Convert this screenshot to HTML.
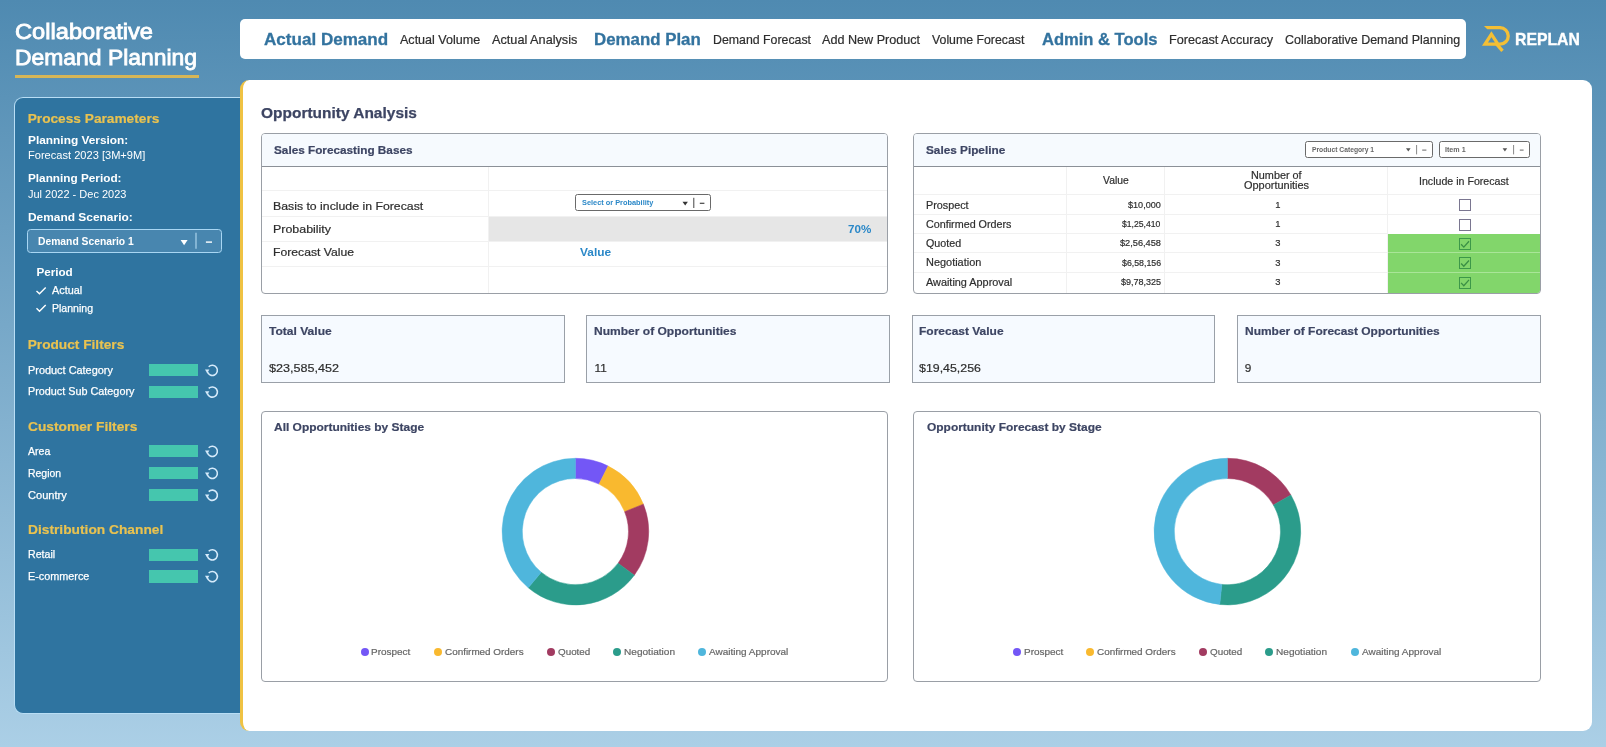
<!DOCTYPE html>
<html lang="en">
<head>
<meta charset="utf-8">
<title>Collaborative Demand Planning - Opportunity Analysis</title>
<style>
*{box-sizing:border-box;margin:0;padding:0}
html,body{width:1606px;height:747px;overflow:hidden}
body{position:relative;font-family:"Liberation Sans",sans-serif;background:linear-gradient(180deg,#4f8ab1 0%,#abcfe6 100%)}
.a{position:absolute}
.t{position:absolute;white-space:pre;font-family:"Liberation Sans",sans-serif;transform-origin:0 0}
#uline{left:15px;top:74.7px;width:184px;height:2.9px;background:#d6b657}
#nav{left:240px;top:19px;width:1225.5px;height:40px;background:#fff;border-radius:5px}
#side{left:14px;top:97px;width:232px;height:616.5px;background:#2f74a0;border:1px solid #b9def5;border-right:none;border-radius:9px 0 0 9px}
#main{left:240px;top:80px;width:1352px;height:650.5px;background:#fff;border-left:3px solid #efc243;border-radius:9px}
#dd{left:27.3px;top:229.2px;width:194.5px;height:23.8px;background:#4886af;border:1.2px solid #a8d6f3;border-radius:3.5px}
.bar{position:absolute;left:148.9px;width:48.8px;height:12.3px;background:#45c6ae}
.panel{position:absolute;border:1px solid #9a9fa6;border-radius:4px;background:#fff;overflow:hidden}
.ph{position:absolute;left:0;top:0;right:0;height:33px;background:#f6fafe;border-bottom:1px solid #8b9097}
.hl{position:absolute;left:0;right:0;height:1px;background:#f1f1f1}
.vl{position:absolute;top:33px;bottom:0;width:1px;background:#f1f1f1}
.card{position:absolute;top:315.4px;height:67.2px;border:1px solid #9aa0a8;background:#f6faff}
.sel{position:absolute;border:1px solid #6a6a6a;border-radius:2.5px;background:#fff}
.cb{position:absolute;left:1458.7px;width:12.2px;height:12px;border:1.2px solid #7a7690;background:#fff}
.cb.on{border-color:#3d9849;background:#82d66b}
.dot{position:absolute;top:647.8px;width:8px;height:8px;border-radius:50%}
svg{position:absolute;overflow:visible}
</style>
</head>
<body>
<div class="a" id="uline"></div>
<div class="a" id="nav"></div>
<!-- logo -->
<svg style="left:1480px;top:22px" width="34" height="34" viewBox="1480 22 34 34" fill="none" stroke="#f4bf35" stroke-width="3.3" stroke-linejoin="miter">
  <path d="M1500 27.7 A8.25 8.25 0 0 1 1500 44.2 H1485 L1491.4 34.2 L1497.9 44.2"/>
  <path d="M1484 26.05 H1500.5 V29.35 H1487.3Z" fill="#f4bf35" stroke="none"/>
  <path d="M1496 43.4 L1502.5 50.9"/>
</svg>

<div class="a" id="side"></div>
<div class="a" id="main"></div>

<!-- sidebar widgets -->
<div class="a" id="dd"></div>
<svg style="left:0;top:0" width="246" height="747" viewBox="0 0 246 747">
  <path d="M180.6 240.1 h7 l-3.5 5.2z" fill="#fff"/>
  <path d="M196 232.8 V248.8" stroke="#b4daf2" stroke-width="1.1"/>
  <path d="M205.9 242.1 H212" stroke="#fff" stroke-width="1.4"/>
  <path d="M36.5 290.9 L39.5 293.8 L45.7 287.6" stroke="#fff" stroke-width="1.4" fill="none"/>
  <path d="M36.5 308.3 L39.5 311.2 L45.7 305" stroke="#fff" stroke-width="1.4" fill="none"/>
  <defs>
    <g id="rf">
      <path d="M-3.6 -3.7 A5.1 5.1 0 1 1 -4.9 1.4" fill="none" stroke="#d6ebfb" stroke-width="1.6"/>
      <path d="M-7.3 -0.9 L-2.9 -0.9 L-5.2 2.6z" fill="#d6ebfb"/>
    </g>
  </defs>
  <use href="#rf" x="212.3" y="370.4"/>
  <use href="#rf" x="212.3" y="392.1"/>
  <use href="#rf" x="212.3" y="451.4"/>
  <use href="#rf" x="212.3" y="473.4"/>
  <use href="#rf" x="212.3" y="495.3"/>
  <use href="#rf" x="212.3" y="554.9"/>
  <use href="#rf" x="212.3" y="576.7"/>
</svg>
<div class="bar" style="top:364px"></div>
<div class="bar" style="top:385.7px"></div>
<div class="bar" style="top:445.1px"></div>
<div class="bar" style="top:467.1px"></div>
<div class="bar" style="top:489px"></div>
<div class="bar" style="top:548.6px"></div>
<div class="bar" style="top:570.4px"></div>

<!-- Sales Forecasting Bases -->
<div class="panel" style="left:261.3px;top:133px;width:626.5px;height:161px">
  <div class="ph"></div>
  <div class="a" style="left:226.2px;top:83px;right:0;height:25px;background:#e6e6e6"></div>
  <div class="hl" style="top:56px"></div>
  <div class="hl" style="top:82px"></div>
  <div class="hl" style="top:107px"></div>
  <div class="hl" style="top:132px"></div>
  <div class="vl" style="left:225.7px"></div>
</div>
<div class="sel" style="left:574.8px;top:194.3px;width:136.6px;height:17.2px"></div>

<!-- Sales Pipeline -->
<div class="panel" style="left:913.3px;top:133px;width:627.3px;height:161px">
  <div class="ph"></div>
  <div class="a" style="left:472.8px;top:100px;right:0;bottom:0;background:#82d66b"></div>
  <div class="a" style="left:472.8px;top:118px;right:0;height:1px;background:#a9e598"></div>
  <div class="a" style="left:472.8px;top:138px;right:0;height:1px;background:#a9e598"></div>
  <div class="hl" style="top:60px"></div>
  <div class="hl" style="top:80px"></div>
  <div class="hl" style="top:99px;width:472.8px;right:auto"></div>
  <div class="hl" style="top:118px;width:472.8px;right:auto"></div>
  <div class="hl" style="top:138px;width:472.8px;right:auto"></div>
  <div class="vl" style="left:151.5px"></div>
  <div class="vl" style="left:249.9px"></div>
  <div class="vl" style="left:472.5px"></div>
</div>
<div class="sel" style="left:1305.2px;top:141.3px;width:127.6px;height:16.6px"></div>
<div class="sel" style="left:1439.2px;top:141.3px;width:90.4px;height:16.6px"></div>
<div class="cb" style="top:199.1px"></div>
<div class="cb" style="top:218.8px"></div>
<div class="cb on" style="top:237.9px"></div>
<div class="cb on" style="top:257.1px"></div>
<div class="cb on" style="top:276.5px"></div>
<svg style="left:0;top:0" width="1606" height="747" viewBox="0 0 1606 747">
  <g fill="#333">
    <path d="M682.5 201.8 h5.4 l-2.7 3.8z"/>
    <path d="M1406 148.3 h4.6 l-2.3 3.2z" fill="#555"/>
    <path d="M1502.6 148.3 h4.6 l-2.3 3.2z" fill="#555"/>
  </g>
  <g stroke="#444" stroke-width="1" fill="none">
    <path d="M693.8 197.8 V208"/>
    <path d="M699.8 203.3 H704.4" stroke-width="1.2"/>
    <path d="M1416.6 145 V154.4" stroke="#888"/>
    <path d="M1422.2 150.1 H1426.4" stroke="#666"/>
    <path d="M1513.6 145 V154.4" stroke="#888"/>
    <path d="M1519.8 150.1 H1523.6" stroke="#666"/>
  </g>
  <g stroke="#3a8f45" stroke-width="1.3" fill="none">
    <path d="M1461.1 244.3 L1463.8 247.1 L1469 241.3"/>
    <path d="M1461.1 263.5 L1463.8 266.3 L1469 260.5"/>
    <path d="M1461.1 282.9 L1463.8 285.7 L1469 279.9"/>
  </g>
</svg>

<!-- KPI cards -->
<div class="card" style="left:260.9px;width:304px"></div>
<div class="card" style="left:586.3px;width:303.6px"></div>
<div class="card" style="left:911.7px;width:303.7px"></div>
<div class="card" style="left:1237.1px;width:303.6px"></div>

<!-- Charts -->
<div class="panel" style="left:261.2px;top:411px;width:627.1px;height:271px"></div>
<div class="panel" style="left:913.3px;top:411px;width:627.4px;height:271px"></div>
<svg style="left:0;top:0" width="1606" height="747" viewBox="0 0 1606 747"><path d="M575.40 458.30 A73.3 73.3 0 0 1 608.11 466.00 L599.09 484.08 A53.1 53.1 0 0 0 575.40 478.50Z" fill="#7357f6" stroke="#7357f6" stroke-width=".5"/><path d="M608.11 466.00 A73.3 73.3 0 0 1 643.36 504.14 L624.63 511.71 A53.1 53.1 0 0 0 599.09 484.08Z" fill="#f9b92f" stroke="#f9b92f" stroke-width=".5"/><path d="M643.36 504.14 A73.3 73.3 0 0 1 634.32 575.20 L618.08 563.19 A53.1 53.1 0 0 0 624.63 511.71Z" fill="#a23b61" stroke="#a23b61" stroke-width=".5"/><path d="M634.32 575.20 A73.3 73.3 0 0 1 528.28 587.75 L541.27 572.28 A53.1 53.1 0 0 0 618.08 563.19Z" fill="#2b9c8b" stroke="#2b9c8b" stroke-width=".5"/><path d="M528.28 587.75 A73.3 73.3 0 0 1 575.40 458.30 L575.40 478.50 A53.1 53.1 0 0 0 541.27 572.28Z" fill="#4fb6dc" stroke="#4fb6dc" stroke-width=".5"/><path d="M1227.40 458.30 A73.3 73.3 0 0 1 1290.88 494.95 L1273.39 505.05 A53.1 53.1 0 0 0 1227.40 478.50Z" fill="#a23b61" stroke="#a23b61" stroke-width=".5"/><path d="M1290.88 494.95 A73.3 73.3 0 0 1 1219.74 604.50 L1221.85 584.41 A53.1 53.1 0 0 0 1273.39 505.05Z" fill="#2b9c8b" stroke="#2b9c8b" stroke-width=".5"/><path d="M1219.74 604.50 A73.3 73.3 0 0 1 1227.40 458.30 L1227.40 478.50 A53.1 53.1 0 0 0 1221.85 584.41Z" fill="#4fb6dc" stroke="#4fb6dc" stroke-width=".5"/></svg>
<div class="dot" style="left:360.5px;background:#7357f6"></div><div class="dot" style="left:433.8px;background:#f9b92f"></div><div class="dot" style="left:546.7px;background:#a23b61"></div><div class="dot" style="left:613.0px;background:#2b9c8b"></div><div class="dot" style="left:698.4px;background:#4fb6dc"></div><div class="dot" style="left:1012.8px;background:#7357f6"></div><div class="dot" style="left:1086.1px;background:#f9b92f"></div><div class="dot" style="left:1199.0px;background:#a23b61"></div><div class="dot" style="left:1265.3px;background:#2b9c8b"></div><div class="dot" style="left:1350.7px;background:#4fb6dc"></div>
<div id="tx" style="position:absolute;left:0;top:0;width:1606px;height:747px;will-change:transform">
<span class="t" style="left:15.40px;top:22.02px;font-size:21.5px;line-height:21.5px;color:#fff;transform:scaleX(1.0997);-webkit-text-stroke:.8px #fff;">Collaborative</span>
<span class="t" style="left:15.40px;top:48.00px;font-size:21.5px;line-height:21.5px;color:#fff;transform:scaleX(1.0648);-webkit-text-stroke:.8px #fff;">Demand Planning</span>
<span class="t" style="left:264.00px;top:32.01px;font-size:16.8px;line-height:16.8px;color:#33739f;font-weight:700;transform:scaleX(1.0167);-webkit-text-stroke:.3px #33739f;">Actual Demand</span>
<span class="t" style="left:400.00px;top:34.00px;font-size:12.4px;line-height:12.4px;color:#2e2e2e;transform:scaleX(1.0124);-webkit-text-stroke:.2px #2e2e2e;">Actual Volume</span>
<span class="t" style="left:492.00px;top:34.00px;font-size:12.4px;line-height:12.4px;color:#2e2e2e;transform:scaleX(1.0247);-webkit-text-stroke:.2px #2e2e2e;">Actual Analysis</span>
<span class="t" style="left:594.00px;top:32.01px;font-size:16.8px;line-height:16.8px;color:#33739f;font-weight:700;transform:scaleX(1.0046);-webkit-text-stroke:.3px #33739f;">Demand Plan</span>
<span class="t" style="left:712.60px;top:34.00px;font-size:12.4px;line-height:12.4px;color:#2e2e2e;transform:scaleX(0.9951);-webkit-text-stroke:.2px #2e2e2e;">Demand Forecast</span>
<span class="t" style="left:822.40px;top:34.00px;font-size:12.4px;line-height:12.4px;color:#2e2e2e;transform:scaleX(1.0174);-webkit-text-stroke:.2px #2e2e2e;">Add New Product</span>
<span class="t" style="left:932.20px;top:34.00px;font-size:12.4px;line-height:12.4px;color:#2e2e2e;transform:scaleX(0.9937);-webkit-text-stroke:.2px #2e2e2e;">Volume Forecast</span>
<span class="t" style="left:1042.00px;top:32.01px;font-size:16.8px;line-height:16.8px;color:#33739f;font-weight:700;transform:scaleX(0.9859);-webkit-text-stroke:.3px #33739f;">Admin &amp; Tools</span>
<span class="t" style="left:1169.30px;top:34.00px;font-size:12.4px;line-height:12.4px;color:#2e2e2e;transform:scaleX(1.0224);-webkit-text-stroke:.2px #2e2e2e;">Forecast Accuracy</span>
<span class="t" style="left:1284.80px;top:34.00px;font-size:12.4px;line-height:12.4px;color:#2e2e2e;transform:scaleX(1.0054);-webkit-text-stroke:.2px #2e2e2e;">Collaborative Demand Planning</span>
<span class="t" style="left:1515.30px;top:31.01px;font-size:16.3px;line-height:16.3px;color:#fff;font-weight:700;transform:scaleX(0.9678);-webkit-text-stroke:.35px #fff;">REPLAN</span>
<span class="t" style="left:27.70px;top:112.02px;font-size:13.7px;line-height:13.7px;color:#e9c250;font-weight:700;-webkit-text-stroke:.2px #e9c250;">Process Parameters</span>
<span class="t" style="left:27.70px;top:134.00px;font-size:11.7px;line-height:11.7px;color:#fff;font-weight:700;transform:scaleX(1.0160);">Planning Version:</span>
<span class="t" style="left:27.70px;top:150.02px;font-size:10.5px;line-height:10.5px;color:#fff;transform:scaleX(1.0550);">Forecast 2023 [3M+9M]</span>
<span class="t" style="left:27.70px;top:172.00px;font-size:11.7px;line-height:11.7px;color:#fff;font-weight:700;transform:scaleX(1.0069);">Planning Period:</span>
<span class="t" style="left:27.70px;top:189.02px;font-size:10.5px;line-height:10.5px;color:#fff;transform:scaleX(1.0470);">Jul 2022 - Dec 2023</span>
<span class="t" style="left:27.70px;top:211.00px;font-size:11.7px;line-height:11.7px;color:#fff;font-weight:700;transform:scaleX(1.0202);">Demand Scenario:</span>
<span class="t" style="left:37.60px;top:237.00px;font-size:10.4px;line-height:10.4px;color:#fff;font-weight:700;transform:scaleX(0.9932);">Demand Scenario 1</span>
<span class="t" style="left:36.40px;top:266.02px;font-size:11.7px;line-height:11.7px;color:#fff;font-weight:700;">Period</span>
<span class="t" style="left:52.20px;top:285.01px;font-size:11px;line-height:11px;color:#fff;transform:scaleX(0.9844);-webkit-text-stroke:.25px #fff;">Actual</span>
<span class="t" style="left:52.20px;top:303.00px;font-size:11px;line-height:11px;color:#fff;transform:scaleX(0.9573);-webkit-text-stroke:.25px #fff;">Planning</span>
<span class="t" style="left:27.70px;top:338.00px;font-size:13.7px;line-height:13.7px;color:#e9c250;font-weight:700;-webkit-text-stroke:.2px #e9c250;">Product Filters</span>
<span class="t" style="left:27.70px;top:365.01px;font-size:11px;line-height:11px;color:#fff;transform:scaleX(0.9917);-webkit-text-stroke:.25px #fff;">Product Category</span>
<span class="t" style="left:27.70px;top:386.01px;font-size:11px;line-height:11px;color:#fff;transform:scaleX(0.9831);-webkit-text-stroke:.25px #fff;">Product Sub Category</span>
<span class="t" style="left:27.70px;top:420.00px;font-size:13.7px;line-height:13.7px;color:#e9c250;font-weight:700;transform:scaleX(1.0049);-webkit-text-stroke:.2px #e9c250;">Customer Filters</span>
<span class="t" style="left:27.70px;top:446.01px;font-size:11px;line-height:11px;color:#fff;transform:scaleX(0.9591);-webkit-text-stroke:.25px #fff;">Area</span>
<span class="t" style="left:27.70px;top:468.01px;font-size:11px;line-height:11px;color:#fff;transform:scaleX(0.9495);-webkit-text-stroke:.25px #fff;">Region</span>
<span class="t" style="left:27.70px;top:490.01px;font-size:11px;line-height:11px;color:#fff;transform:scaleX(1.0070);-webkit-text-stroke:.25px #fff;">Country</span>
<span class="t" style="left:27.70px;top:523.00px;font-size:13.7px;line-height:13.7px;color:#e9c250;font-weight:700;transform:scaleX(1.0052);-webkit-text-stroke:.2px #e9c250;">Distribution Channel</span>
<span class="t" style="left:27.70px;top:549.00px;font-size:11px;line-height:11px;color:#fff;transform:scaleX(0.9636);-webkit-text-stroke:.25px #fff;">Retail</span>
<span class="t" style="left:27.70px;top:571.00px;font-size:11px;line-height:11px;color:#fff;transform:scaleX(0.9833);-webkit-text-stroke:.25px #fff;">E-commerce</span>
<span class="t" style="left:261.40px;top:105.00px;font-size:15.1px;line-height:15.1px;color:#3d4563;font-weight:700;transform:scaleX(1.0251);-webkit-text-stroke:.25px #3d4563;">Opportunity Analysis</span>
<span class="t" style="left:273.70px;top:145.01px;font-size:11.4px;line-height:11.4px;color:#3d4563;font-weight:700;transform:scaleX(1.0318);-webkit-text-stroke:.2px #3d4563;">Sales Forecasting Bases</span>
<span class="t" style="left:273.30px;top:201.00px;font-size:11.3px;line-height:11.3px;color:#2e2e2e;transform:scaleX(1.0873);-webkit-text-stroke:.2px #2e2e2e;">Basis to include in Forecast</span>
<span class="t" style="left:273.30px;top:224.00px;font-size:11.3px;line-height:11.3px;color:#2e2e2e;transform:scaleX(1.0995);-webkit-text-stroke:.2px #2e2e2e;">Probability</span>
<span class="t" style="left:273.30px;top:247.01px;font-size:11.3px;line-height:11.3px;color:#2e2e2e;transform:scaleX(1.0780);-webkit-text-stroke:.2px #2e2e2e;">Forecast Value</span>
<span class="t" style="left:581.70px;top:199.00px;font-size:8px;line-height:8px;color:#2b88c8;font-weight:700;transform:scaleX(0.9217);">Select or Probability</span>
<span class="t" style="left:847.50px;top:224.01px;font-size:11.4px;line-height:11.4px;color:#2b88c8;font-weight:700;transform:scaleX(1.0214);">70%</span>
<span class="t" style="left:580.00px;top:247.01px;font-size:11.4px;line-height:11.4px;color:#2b88c8;font-weight:700;transform:scaleX(1.0448);">Value</span>
<span class="t" style="left:926.10px;top:145.01px;font-size:11.4px;line-height:11.4px;color:#3d4563;font-weight:700;transform:scaleX(1.0338);-webkit-text-stroke:.2px #3d4563;">Sales Pipeline</span>
<span class="t" style="left:1312.40px;top:147.01px;font-size:6.8px;line-height:6.8px;color:#666;font-weight:700;transform:scaleX(0.9904);">Product Category 1</span>
<span class="t" style="left:1444.50px;top:147.01px;font-size:6.8px;line-height:6.8px;color:#666;font-weight:700;transform:scaleX(1.0480);">Item 1</span>
<span class="t" style="left:1103.00px;top:175.01px;font-size:11px;line-height:11px;color:#2e2e2e;transform:scaleX(0.9404);-webkit-text-stroke:.2px #2e2e2e;">Value</span>
<span class="t" style="left:1251.20px;top:170.00px;font-size:11px;line-height:11px;color:#2e2e2e;transform:scaleX(0.9852);-webkit-text-stroke:.2px #2e2e2e;">Number of</span>
<span class="t" style="left:1244.20px;top:180.00px;font-size:11px;line-height:11px;color:#2e2e2e;transform:scaleX(0.9948);-webkit-text-stroke:.2px #2e2e2e;">Opportunities</span>
<span class="t" style="left:1419.40px;top:176.00px;font-size:11px;line-height:11px;color:#2e2e2e;transform:scaleX(0.9652);-webkit-text-stroke:.2px #2e2e2e;">Include in Forecast</span>
<span class="t" style="left:926.10px;top:200.01px;font-size:11px;line-height:11px;color:#2e2e2e;transform:scaleX(0.9811);-webkit-text-stroke:.2px #2e2e2e;">Prospect</span>
<span class="t" style="left:1128.00px;top:200.01px;font-size:9.4px;line-height:9.4px;color:#2e2e2e;transform:scaleX(0.9678);-webkit-text-stroke:.2px #2e2e2e;">$10,000</span>
<span class="t" style="left:1275.20px;top:200.01px;font-size:9.4px;line-height:9.4px;color:#2e2e2e;-webkit-text-stroke:.2px #2e2e2e;">1</span>
<span class="t" style="left:926.10px;top:219.01px;font-size:11px;line-height:11px;color:#2e2e2e;transform:scaleX(0.9780);-webkit-text-stroke:.2px #2e2e2e;">Confirmed Orders</span>
<span class="t" style="left:1122.40px;top:219.01px;font-size:9.4px;line-height:9.4px;color:#2e2e2e;transform:scaleX(0.9204);-webkit-text-stroke:.2px #2e2e2e;">$1,25,410</span>
<span class="t" style="left:1275.20px;top:219.01px;font-size:9.4px;line-height:9.4px;color:#2e2e2e;-webkit-text-stroke:.2px #2e2e2e;">1</span>
<span class="t" style="left:926.10px;top:238.00px;font-size:11px;line-height:11px;color:#2e2e2e;transform:scaleX(0.9725);-webkit-text-stroke:.2px #2e2e2e;">Quoted</span>
<span class="t" style="left:1119.80px;top:238.00px;font-size:9.4px;line-height:9.4px;color:#2e2e2e;transform:scaleX(0.9828);-webkit-text-stroke:.2px #2e2e2e;">$2,56,458</span>
<span class="t" style="left:1275.20px;top:238.00px;font-size:9.4px;line-height:9.4px;color:#2e2e2e;-webkit-text-stroke:.2px #2e2e2e;">3</span>
<span class="t" style="left:926.10px;top:257.00px;font-size:11px;line-height:11px;color:#2e2e2e;transform:scaleX(0.9936);-webkit-text-stroke:.2px #2e2e2e;">Negotiation</span>
<span class="t" style="left:1121.70px;top:258.00px;font-size:9.4px;line-height:9.4px;color:#2e2e2e;transform:scaleX(0.9372);-webkit-text-stroke:.2px #2e2e2e;">$6,58,156</span>
<span class="t" style="left:1275.20px;top:258.00px;font-size:9.4px;line-height:9.4px;color:#2e2e2e;-webkit-text-stroke:.2px #2e2e2e;">3</span>
<span class="t" style="left:926.10px;top:277.01px;font-size:11px;line-height:11px;color:#2e2e2e;transform:scaleX(0.9880);-webkit-text-stroke:.2px #2e2e2e;">Awaiting Approval</span>
<span class="t" style="left:1120.70px;top:277.01px;font-size:9.4px;line-height:9.4px;color:#2e2e2e;transform:scaleX(0.9612);-webkit-text-stroke:.2px #2e2e2e;">$9,78,325</span>
<span class="t" style="left:1275.20px;top:277.01px;font-size:9.4px;line-height:9.4px;color:#2e2e2e;-webkit-text-stroke:.2px #2e2e2e;">3</span>
<span class="t" style="left:269.00px;top:326.01px;font-size:11.3px;line-height:11.3px;color:#3d4563;font-weight:700;transform:scaleX(1.0661);-webkit-text-stroke:.2px #3d4563;">Total Value</span>
<span class="t" style="left:269.00px;top:363.01px;font-size:11.8px;line-height:11.8px;color:#2e2e2e;transform:scaleX(1.0669);-webkit-text-stroke:.2px #2e2e2e;">$23,585,452</span>
<span class="t" style="left:594.00px;top:326.01px;font-size:11.3px;line-height:11.3px;color:#3d4563;font-weight:700;transform:scaleX(1.0652);-webkit-text-stroke:.2px #3d4563;">Number of Opportunities</span>
<span class="t" style="left:594.60px;top:363.01px;font-size:11.8px;line-height:11.8px;color:#2e2e2e;-webkit-text-stroke:.2px #2e2e2e;">11</span>
<span class="t" style="left:919.40px;top:326.01px;font-size:11.3px;line-height:11.3px;color:#3d4563;font-weight:700;transform:scaleX(1.0608);-webkit-text-stroke:.2px #3d4563;">Forecast Value</span>
<span class="t" style="left:919.40px;top:363.01px;font-size:11.8px;line-height:11.8px;color:#2e2e2e;transform:scaleX(1.0483);-webkit-text-stroke:.2px #2e2e2e;">$19,45,256</span>
<span class="t" style="left:1244.80px;top:326.01px;font-size:11.3px;line-height:11.3px;color:#3d4563;font-weight:700;transform:scaleX(1.0587);-webkit-text-stroke:.2px #3d4563;">Number of Forecast Opportunities</span>
<span class="t" style="left:1244.80px;top:363.01px;font-size:11.8px;line-height:11.8px;color:#2e2e2e;-webkit-text-stroke:.2px #2e2e2e;">9</span>
<span class="t" style="left:273.90px;top:422.02px;font-size:11.3px;line-height:11.3px;color:#3d4563;font-weight:700;transform:scaleX(1.0581);-webkit-text-stroke:.2px #3d4563;">All Opportunities by Stage</span>
<span class="t" style="left:926.50px;top:422.02px;font-size:11.3px;line-height:11.3px;color:#3d4563;font-weight:700;transform:scaleX(1.0576);-webkit-text-stroke:.2px #3d4563;">Opportunity Forecast by Stage</span>
<span class="t" style="left:371.40px;top:647.01px;font-size:9.8px;line-height:9.8px;color:#666;transform:scaleX(1.0162);-webkit-text-stroke:.2px #666;">Prospect</span>
<span class="t" style="left:445.00px;top:647.01px;font-size:9.8px;line-height:9.8px;color:#666;transform:scaleX(1.0095);-webkit-text-stroke:.2px #666;">Confirmed Orders</span>
<span class="t" style="left:558.00px;top:647.01px;font-size:9.8px;line-height:9.8px;color:#666;transform:scaleX(1.0050);-webkit-text-stroke:.2px #666;">Quoted</span>
<span class="t" style="left:624.00px;top:647.01px;font-size:9.8px;line-height:9.8px;color:#666;transform:scaleX(1.0287);-webkit-text-stroke:.2px #666;">Negotiation</span>
<span class="t" style="left:709.30px;top:647.01px;font-size:9.8px;line-height:9.8px;color:#666;transform:scaleX(1.0206);-webkit-text-stroke:.2px #666;">Awaiting Approval</span>
<span class="t" style="left:1023.70px;top:647.01px;font-size:9.8px;line-height:9.8px;color:#666;transform:scaleX(1.0162);-webkit-text-stroke:.2px #666;">Prospect</span>
<span class="t" style="left:1097.30px;top:647.01px;font-size:9.8px;line-height:9.8px;color:#666;transform:scaleX(1.0095);-webkit-text-stroke:.2px #666;">Confirmed Orders</span>
<span class="t" style="left:1210.30px;top:647.01px;font-size:9.8px;line-height:9.8px;color:#666;transform:scaleX(1.0050);-webkit-text-stroke:.2px #666;">Quoted</span>
<span class="t" style="left:1276.30px;top:647.01px;font-size:9.8px;line-height:9.8px;color:#666;transform:scaleX(1.0287);-webkit-text-stroke:.2px #666;">Negotiation</span>
<span class="t" style="left:1361.60px;top:647.01px;font-size:9.8px;line-height:9.8px;color:#666;transform:scaleX(1.0206);-webkit-text-stroke:.2px #666;">Awaiting Approval</span>
</div>
</body>
</html>
